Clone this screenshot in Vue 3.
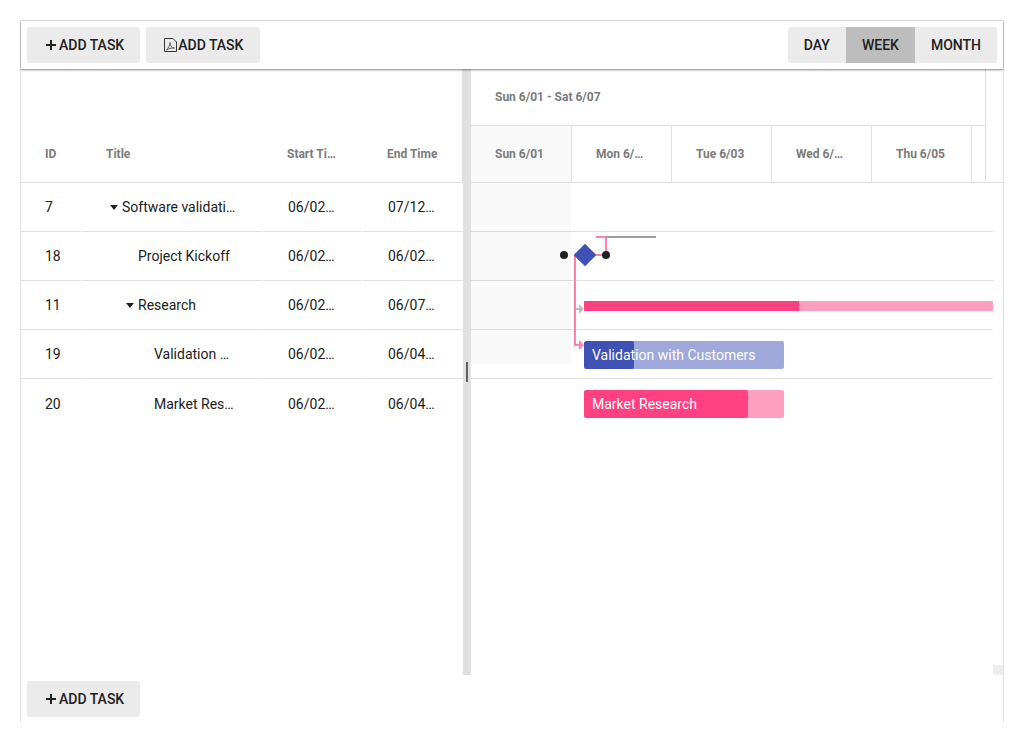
<template>
  <div class="gantt">
    <!-- Top toolbar -->
    <div class="toolbar">
      <div class="tool-group">
        <button class="btn">
          <svg class="icon" viewBox="0 0 16 16"><path d="M3 7h10v2H3zM7 3h2v10H7z" fill="#212121" /></svg>
          ADD TASK
        </button>
        <button class="btn pdf">
          <svg class="icon" viewBox="0 0 16 16">
            <path d="M2.5 1.5h8.5l3.5 3.5v9.5h-12z" fill="none" stroke="#333" />
            <path d="M4.5 13c2-2 3.5-5 3.5-7.5 0 3.5 1.5 5.5 4.5 5.5-3 0-6 .5-8 2z" fill="none" stroke="#555" stroke-width=".9" />
          </svg>
          ADD TASK
        </button>
      </div>
      <div class="view-group">
        <button
          v-for="v in views"
          :key="v"
          class="view-btn"
          :class="{ active: v === currentView }"
        >{{ v }}</button>
      </div>
    </div>

    <div class="body">
      <!-- Task table -->
      <div class="table">
        <div class="table-head">
          <div class="head-row">
            <div v-for="c in columns" :key="c" class="head-cell">{{ c }}</div>
          </div>
        </div>
        <div v-for="(t, i) in tasks" :key="t.id" class="row" :class="{ last: i === tasks.length - 1 }">
          <div class="cell id-cell">{{ t.id }}</div>
          <div class="cell title-cell">
            <span class="indent" :style="{ width: t.level * 16 + 'px' }"></span>
            <span class="caret-box"><span v-if="t.parent" class="caret"></span></span>
            <span class="title-text">{{ t.title }}</span>
          </div>
          <div class="cell date-cell">{{ t.start }}</div>
          <div class="cell date-cell">{{ t.end }}</div>
        </div>
      </div>

      <!-- Splitter -->
      <div class="splitter"><span class="handle"></span></div>

      <!-- Timeline -->
      <div class="timeline">
        <div class="time-head-wrap">
          <div class="time-head">
            <div class="week-label">Sun 6/01 - Sat 6/07</div>
            <div class="days">
              <div v-for="(d, i) in days" :key="d" class="day" :class="{ weekend: i === 0 }">{{ d }}</div>
            </div>
          </div>
        </div>
        <div class="chart">
          <div v-for="(t, i) in tasks" :key="t.id" class="chart-row" :class="{ last: i === tasks.length - 1 }"></div>
          <div class="nonwork"></div>

          <svg class="links" width="522" height="300">
            <path d="M125 54h10v18M125 72h10" fill="none" stroke="#ff80ab" stroke-width="2" />
            <path d="M135 54h50" fill="none" stroke="#9e9e9e" stroke-width="2" />
            <path d="M104 72v90h5" fill="none" stroke="#ff80ab" stroke-width="2" />
            <path d="M105 126h4" fill="none" stroke="#bdbdbd" stroke-width="2" />
            <path d="M108 121l5 5-5 5z" fill="#bdbdbd" />
            <path d="M108 157l5 5-5 5z" fill="#ff80ab" />
            <rect x="106" y="64" width="16" height="16" transform="rotate(45 114 72)" fill="#3f51b5" />
            <circle cx="93" cy="72" r="4" fill="#212121" />
            <circle cx="135" cy="72" r="4" fill="#212121" />
          </svg>

          <div
            v-for="b in bars"
            :key="b.top"
            class="bar"
            :class="[b.kind, { labelled: b.label }]"
            :style="{ top: b.top + 'px', width: b.width + 'px', height: b.height + 'px' }"
          >
            <div class="progress" :style="{ width: b.progress + 'px' }"></div>
            <span v-if="b.label" class="bar-label">{{ b.label }}</span>
          </div>
        </div>
        <div class="corner"></div>
      </div>
    </div>

    <!-- Bottom toolbar -->
    <div class="footer">
      <button class="btn">
        <svg class="icon" viewBox="0 0 16 16"><path d="M3 7h10v2H3zM7 3h2v10H7z" fill="#212121" /></svg>
        ADD TASK
      </button>
    </div>
  </div>
</template>

<script setup>
const views = ['Day', 'Week', 'Month']
const currentView = 'Week'

const columns = ['ID', 'Title', 'Start Time', 'End Time']

const tasks = [
  { id: 7, level: 0, parent: true, title: 'Software validation', start: '06/02/2025', end: '07/12/2025' },
  { id: 18, level: 1, parent: false, title: 'Project Kickoff', start: '06/02/2025', end: '06/02/2025' },
  { id: 11, level: 1, parent: true, title: 'Research', start: '06/02/2025', end: '06/07/2025' },
  { id: 19, level: 2, parent: false, title: 'Validation with Customers', start: '06/02/2025', end: '06/04/2025' },
  { id: 20, level: 2, parent: false, title: 'Market Research', start: '06/02/2025', end: '06/04/2025' }
]

const days = ['Sun 6/01', 'Mon 6/02', 'Tue 6/03', 'Wed 6/04', 'Thu 6/05', 'Fri 6/06']

const bars = [
  { top: 118, height: 10, width: 409, progress: 215, kind: 'pink' },
  { top: 158, height: 28, width: 200, progress: 50, kind: 'blue', label: 'Validation with Customers' },
  { top: 207, height: 28, width: 200, progress: 164, kind: 'pink', label: 'Market Research' }
]
</script>

<style>
html,
body {
  margin: 0;
  overflow: hidden;
  background: #fff;
}
</style>

<style scoped>
.gantt {
  box-sizing: border-box;
  width: 984px;
  height: 702px;
  margin: 20px 20px 0;
  border: 1px solid #e0e0e0;
  border-bottom: none;
  display: flex;
  flex-direction: column;
  font-family: Roboto, "Liberation Sans", sans-serif;
  font-size: 14px;
  color: #212121;
}

/* Toolbars */
.toolbar {
  position: relative;
  z-index: 2;
  box-sizing: border-box;
  height: 48px;
  flex: none;
  padding: 6px;
  display: flex;
  justify-content: space-between;
  background: #fff;
  box-shadow: 0 1px 2px rgba(0, 0, 0, 0.5);
}

.tool-group {
  display: flex;
  gap: 6px;
}

.btn,
.view-btn {
  height: 36px;
  padding: 0 16px;
  border: none;
  background: #ebebeb;
  color: #212121;
  font-family: inherit;
  font-size: 14px;
  font-weight: 500;
  text-transform: uppercase;
  display: flex;
  align-items: center;
}

.btn {
  border-radius: 3px;
}

.btn.pdf {
  padding-right: 17px;
}

.icon {
  width: 16px;
  height: 16px;
  flex: none;
}

.view-group {
  display: flex;
  border-radius: 3px;
  overflow: hidden;
}

.view-btn.active {
  background: #bdbdbd;
}

.footer {
  box-sizing: border-box;
  flex: none;
  height: 47px;
  padding: 6px;
  display: flex;
}

/* Layout */
.body {
  flex: 1;
  min-height: 0;
  display: flex;
}

.table {
  width: 442px;
  flex: none;
}

.table-head {
  box-sizing: border-box;
  height: 114px;
  border-bottom: 1px solid #e0e0e0;
  border-right: 1px solid #e0e0e0;
  display: flex;
  align-items: flex-end;
}

.head-row,
.row {
  display: grid;
  grid-template-columns: 60px 180px 99px 100px;
  column-gap: 1px;
  width: 442px;
}

.head-cell {
  box-sizing: border-box;
  height: 57px;
  line-height: 59px;
  padding: 0 24px;
  font-size: 12px;
  font-weight: 700;
  color: #7b7b7b;
  white-space: nowrap;
  overflow: hidden;
  text-overflow: ellipsis;
}

.row {
  height: 49px;
}

.cell {
  box-sizing: border-box;
  height: 49px;
  line-height: 48px;
  padding: 0 24px;
  border-bottom: 1px solid #e0e0e0;
  white-space: nowrap;
  overflow: hidden;
  text-overflow: ellipsis;
}

.id-cell {
  padding-right: 0;
}

.date-cell {
  padding-left: 25px;
  padding-right: 23px;
}

.row.last .cell {
  border-bottom: none;
  padding-top: 1px;
}

.title-cell {
  display: flex;
  align-items: center;
}

.indent {
  flex: none;
}

.caret-box {
  flex: none;
  width: 16px;
  display: flex;
  justify-content: center;
}

.caret {
  width: 0;
  height: 0;
  margin-top: 1px;
  border-left: 4px solid transparent;
  border-right: 4px solid transparent;
  border-top: 5px solid #212121;
}

.title-text {
  min-width: 0;
  overflow: hidden;
  text-overflow: ellipsis;
}

.splitter {
  flex: none;
  width: 8px;
  background: #e0e0e0;
  display: flex;
  align-items: center;
  justify-content: center;
}

.handle {
  width: 2px;
  height: 20px;
  background: #616161;
}

/* Timeline */
.timeline {
  position: relative;
  flex: 1;
  min-width: 0;
  overflow: hidden;
}

.time-head-wrap {
  height: 114px;
  box-sizing: border-box;
  border-bottom: 1px solid #e0e0e0;
}

.time-head {
  box-sizing: border-box;
  width: 515px;
  height: 113px;
  border-right: 1px solid #e0e0e0;
  overflow: hidden;
}

.week-label {
  box-sizing: border-box;
  height: 57px;
  line-height: 57px;
  padding: 0 24px;
  border-bottom: 1px solid #e0e0e0;
  font-size: 12px;
  font-weight: 700;
  color: #7b7b7b;
}

.days {
  display: flex;
  height: 56px;
}

.day {
  box-sizing: border-box;
  flex: none;
  width: 100px;
  line-height: 56px;
  padding: 0 24px;
  border-right: 1px solid #e0e0e0;
  font-size: 12px;
  font-weight: 700;
  color: #7b7b7b;
  white-space: nowrap;
  overflow: hidden;
  text-overflow: ellipsis;
}

.day.weekend {
  width: 101px;
  background: #f9f9f9;
}

.chart {
  position: relative;
  width: 522px;
  height: 492px;
  overflow: hidden;
}

.chart-row {
  box-sizing: border-box;
  height: 49px;
  border-bottom: 1px solid #e0e0e0;
}

.chart-row.last {
  border-bottom: none;
}

.nonwork {
  position: absolute;
  left: 0;
  top: 0;
  width: 100px;
  height: 181px;
  background: rgba(0, 0, 0, 0.024);
}

.links {
  position: absolute;
  left: 0;
  top: 0;
}

.bar {
  position: absolute;
  left: 113px;
  overflow: hidden;
}

.bar.labelled {
  border-radius: 2px;
}

.bar.pink {
  background: #ff9fc0;
}

.bar.blue {
  background: #9fa8da;
}

.progress {
  height: 100%;
}

.labelled .progress {
  border-radius: 2px;
}

.pink .progress {
  background: #ff4081;
}

.blue .progress {
  background: #3f51b5;
}

.bar-label {
  position: absolute;
  left: 8px;
  top: 0;
  line-height: 28px;
  color: #fff;
  white-space: nowrap;
}

.corner {
  position: absolute;
  right: 0;
  bottom: 0;
  width: 10px;
  height: 10px;
  background: #eee;
}
</style>
